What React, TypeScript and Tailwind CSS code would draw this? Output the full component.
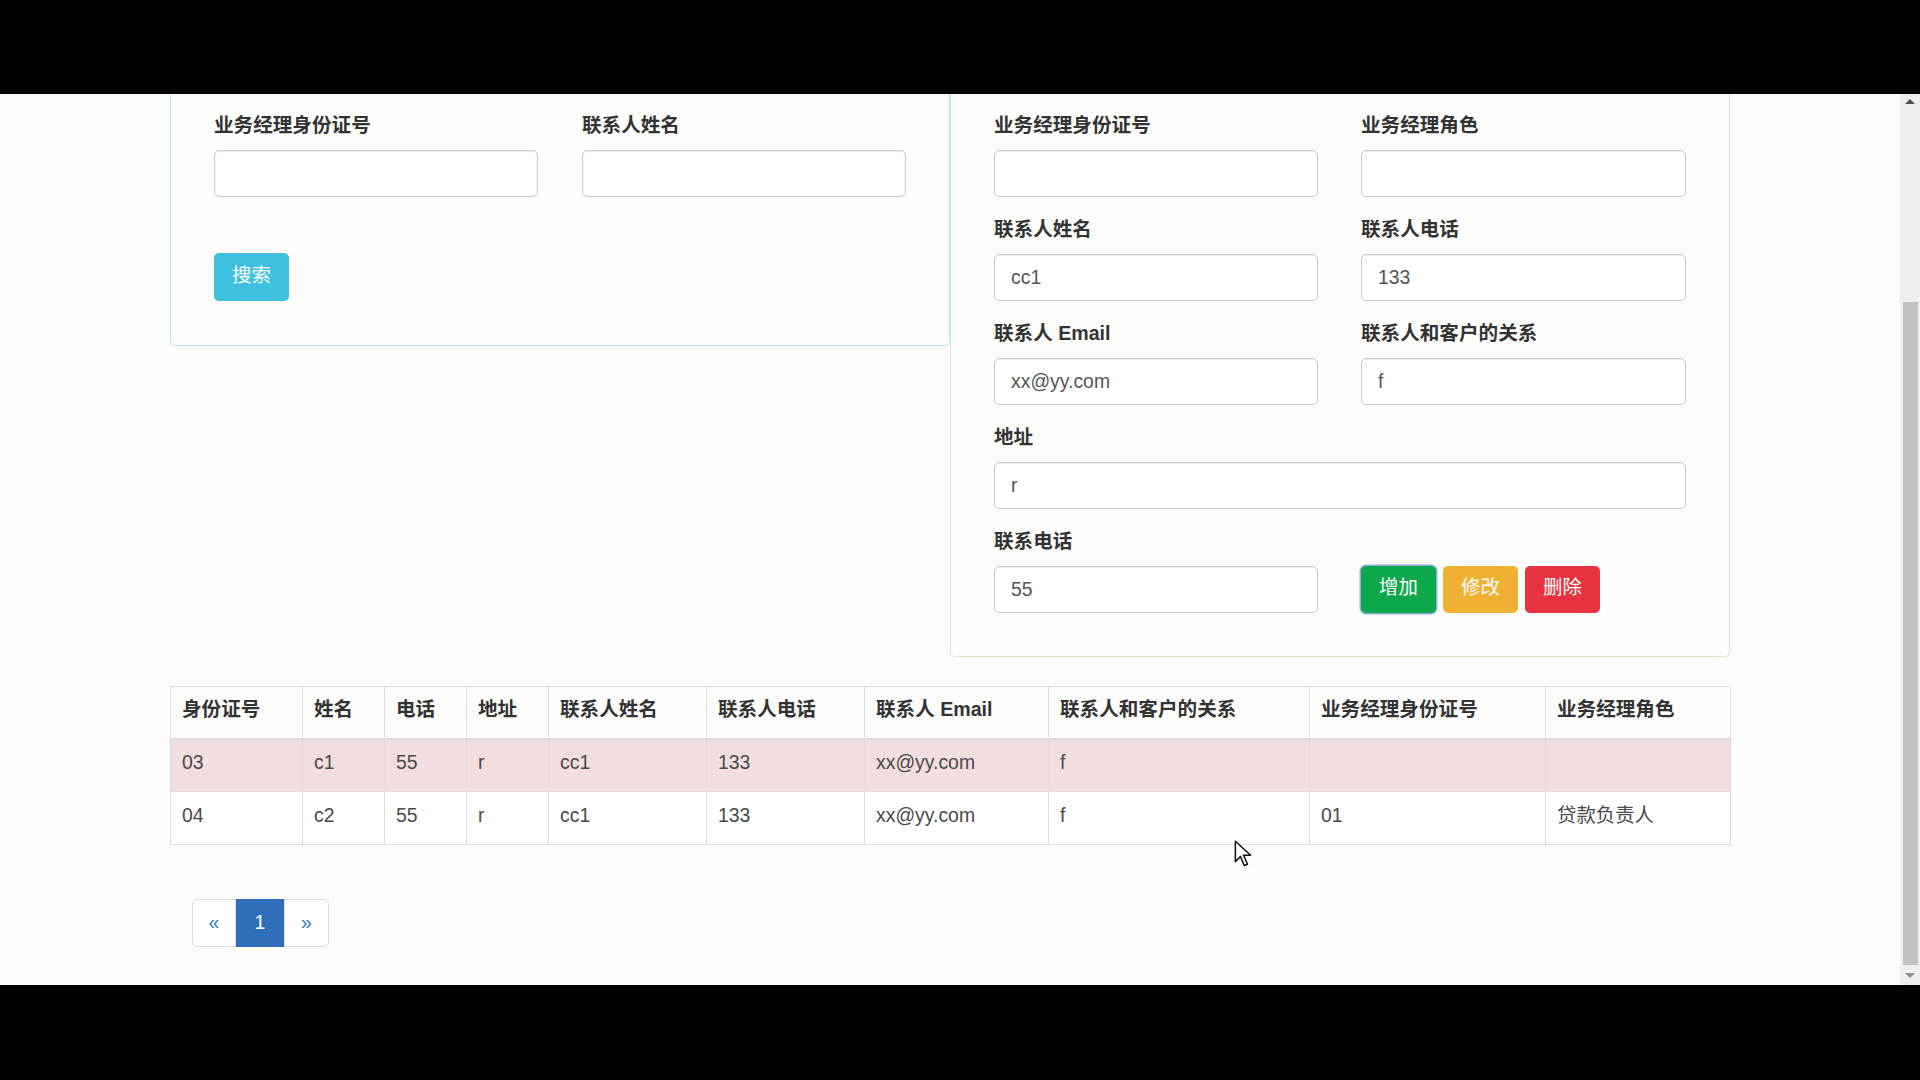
import React from 'react';

const FONT = "font-['Liberation_Sans','Noto_Sans_CJK_SC',sans-serif]";

function Field({ label, value = '', span = false }: { label: string; value?: string; span?: boolean }) {
  return (
    <div className={span ? 'col-span-2 mb-[19px]' : 'mb-[19px]'}>
      <label className="block text-[19.6px] leading-[27px] font-bold text-[#333] mb-[11px]">{label}</label>
      <input
        readOnly
        defaultValue={value}
        className="block w-full h-[47px] px-[16px] bg-white border border-[#ccc] rounded-[5px] shadow-[inset_0_1px_1px_rgba(0,0,0,0.075)] text-[19.4px] text-[#555] outline-none"
      />
    </div>
  );
}

const headers = ['身份证号', '姓名', '电话', '地址', '联系人姓名', '联系人电话', '联系人 Email', '联系人和客户的关系', '业务经理身份证号', '业务经理角色'];
const widths = [132, 82, 82, 82, 158, 158, 184, 261, 236, 185];

const rows = [
  { danger: true, cells: ['03', 'c1', '55', 'r', 'cc1', '133', 'xx@yy.com', 'f', '', ''] },
  { danger: false, cells: ['04', 'c2', '55', 'r', 'cc1', '133', 'xx@yy.com', 'f', '01', '贷款负责人'] },
];

function Scrollbar() {
  return (
    <div className="w-[20px] h-full bg-[#efefef] flex flex-col items-center">
      <div className="h-[208px] w-full flex justify-center pt-[5px]">
        <div className="w-0 h-0 border-l-[5px] border-r-[5px] border-b-[5px] border-l-transparent border-r-transparent border-b-[#505050]" />
      </div>
      <div className="w-[15px] h-[663px] bg-[#c1c1c1] ml-[1px]" />
      <div className="flex-1 w-full flex justify-center pt-[8px]">
        <div className="w-0 h-0 border-l-[5px] border-r-[5px] border-t-[5px] border-l-transparent border-r-transparent border-t-[#909090]" />
      </div>
    </div>
  );
}

export default function App() {
  return (
    <div className={`w-[1920px] h-[1080px] bg-black flex flex-col ${FONT}`}>
      <div className="h-[94px] shrink-0" />

      <div className="h-[891px] shrink-0 flex bg-[#fdfdfc] overflow-hidden">
        <main className="relative w-[1900px] h-full">
          <div className="ml-[170px] w-[1560px]">
            {/* form panels */}
            <div className="flex items-start">
              <div className="w-[780px] border border-t-0 border-[#b8e6f0] rounded-b-[5px] pt-[18px] pb-[44px] px-[43px]">
                <div className="grid grid-cols-[324px_324px] gap-x-[44px]">
                  <Field label="业务经理身份证号" />
                  <Field label="联系人姓名" />
                </div>
                <button className="mt-[37px] w-[75px] h-[48px] rounded-[5px] bg-[#3fc0df] text-white text-[19.4px] leading-none pb-[3px]">
                  搜索
                </button>
              </div>

              <div className="w-[780px] border border-t-0 border-[#d6e9c6] rounded-b-[5px] pt-[18px] pb-[24px] px-[43px]">
                <div className="grid grid-cols-[324px_325px] gap-x-[43px]">
                  <Field label="业务经理身份证号" />
                  <Field label="业务经理角色" />
                  <Field label="联系人姓名" value="cc1" />
                  <Field label="联系人电话" value="133" />
                  <Field label="联系人 Email" value="xx@yy.com" />
                  <Field label="联系人和客户的关系" value="f" />
                  <Field label="地址" value="r" span />
                  <Field label="联系电话" value="55" />
                  <div className="flex items-start gap-[7px] pt-[38px]">
                    <button className="w-[75px] h-[47px] rounded-[5px] bg-[#0da84b] text-white text-[19.4px] leading-none pb-[3px] shadow-[0_0_0_1.5px_#8fb1d9]">
                      增加
                    </button>
                    <button className="w-[75px] h-[47px] rounded-[5px] bg-[#f0b133] text-white text-[19.4px] leading-none pb-[3px]">
                      修改
                    </button>
                    <button className="w-[75px] h-[47px] rounded-[5px] bg-[#e5343f] text-white text-[19.4px] leading-none pb-[3px]">
                      删除
                    </button>
                  </div>
                </div>
              </div>
            </div>

            {/* table */}
            <table className="mt-[29px] w-[1560px] table-fixed border-collapse border border-[#ddd] text-[19.4px]">
              <colgroup>
                {widths.map((w, i) => (
                  <col key={i} style={{ width: w }} />
                ))}
              </colgroup>
              <thead>
                <tr className="h-[52px]">
                  {headers.map((h) => (
                    <th key={h} className="border border-[#ddd] border-b-2 px-[11px] pb-[5px] text-left text-[19.6px] font-bold text-[#333] leading-[27px]">
                      {h}
                    </th>
                  ))}
                </tr>
              </thead>
              <tbody>
                {rows.map((r, ri) => (
                  <tr key={ri} className={r.danger ? 'h-[53px] bg-[#f2dede]' : 'h-[53px] bg-white'}>
                    {r.cells.map((c, ci) => (
                      <td key={ci} className="border border-[#ddd] px-[11px] text-[#4a4a4a] leading-[27px] pb-[5px]">
                        {c}
                      </td>
                    ))}
                  </tr>
                ))}
              </tbody>
            </table>

            {/* pagination */}
            <ul className="mt-[54px] ml-[22px] flex h-[48px] text-[19.4px]">
              <li className="w-[44px] flex items-center justify-center border border-[#ddd] rounded-l-[5px] text-[#337ab7] bg-white">«</li>
              <li className="w-[48px] flex items-center justify-center bg-[#2f6fba] text-white">1</li>
              <li className="w-[45px] flex items-center justify-center border border-[#ddd] rounded-r-[5px] text-[#337ab7] bg-white">»</li>
            </ul>
          </div>

          {/* mouse pointer */}
          <svg className="absolute left-[1234px] top-[746px]" width="18" height="28" viewBox="0 0 14 22">
            <path d="M1 1 L1 17 L5 13 L8 20 L10.5 19 L7.5 12 L13 12 Z" fill="#fff" stroke="#111" strokeWidth="1.2" strokeLinejoin="round" />
          </svg>
        </main>
        <Scrollbar />
      </div>

      <div className="flex-1" />
    </div>
  );
}
